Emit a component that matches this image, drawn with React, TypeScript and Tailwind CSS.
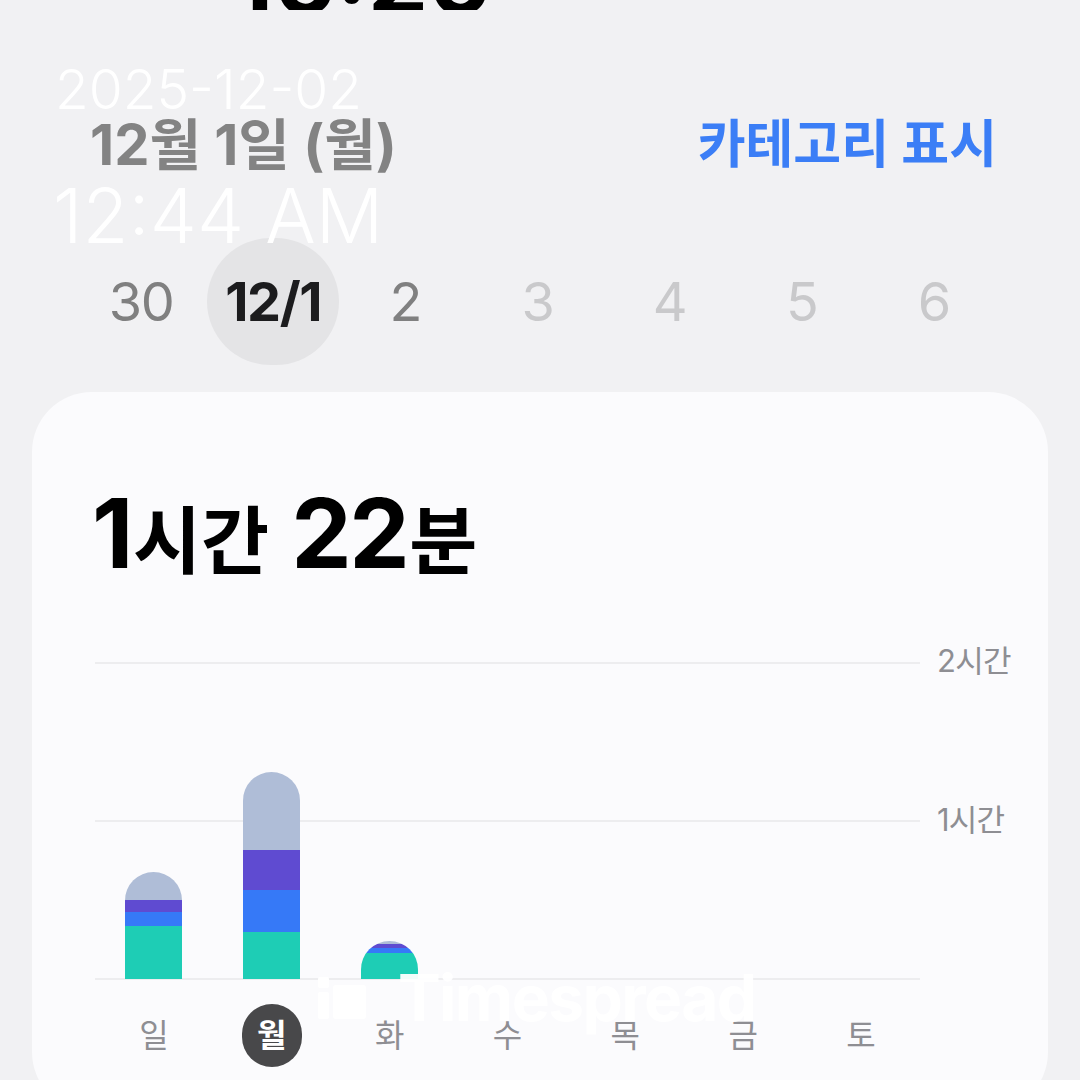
const bars = [
  { day: "일", segs: [28, 12, 14, 53] },
  { day: "월", segs: [78, 40, 42, 47], active: true },
  { day: "화", segs: [3, 4, 5, 26] },
  { day: "수", segs: [] },
  { day: "목", segs: [] },
  { day: "금", segs: [] },
  { day: "토", segs: [] },
];

const segColors = ["bg-[#afbdd7]", "bg-[#5f4bd1]", "bg-[#3679f7]", "bg-[#1ecdb5]"];

const dates = [
  { label: "30", cls: "text-[#808080]" },
  { label: "12/1", cls: "text-[#1c1c1e] font-bold", active: true },
  { label: "2", cls: "text-[#808080]" },
  { label: "3", cls: "text-[#c9c9cb]" },
  { label: "4", cls: "text-[#c9c9cb]" },
  { label: "5", cls: "text-[#c9c9cb]" },
  { label: "6", cls: "text-[#c9c9cb]" },
];

function Bar({ segs }: { segs: number[] }) {
  if (!segs.length) return <div />;
  return (
    <div className="w-[57px] rounded-t-full overflow-hidden flex flex-col">
      {segs.map((h, i) => (
        <div key={i} className={segColors[i]} style={{ height: h }} />
      ))}
    </div>
  );
}

export default function App() {
  return (
    <div
      className="relative w-[1080px] h-[1080px] overflow-hidden bg-[#f1f1f3]"
      style={{ fontFamily: "Inter, 'Noto Sans CJK KR', sans-serif" }}
    >
      {/* 잘린 상단 제목 */}
      <div className="h-[10px] overflow-hidden flex items-end pl-[232px]">
        <div className="text-[96px] font-bold leading-none text-black -mb-[17px]">16:26</div>
      </div>

      {/* 날짜 + 카테고리 */}
      <div className="mt-[108px] h-[54px] flex items-center justify-between pl-[90px] pr-[83px]">
        <span className="text-[56px] font-bold text-[#838383] leading-none">12월 1일 (월)</span>
        <span className="text-[52px] font-bold text-[#3b7ef6] leading-none">카테고리 표시</span>
      </div>

      {/* 주간 날짜 선택 */}
      <div className="mt-[66px] ml-[75px] w-[925px] grid grid-cols-7 h-[127px]">
        {dates.map((d) => (
          <div key={d.label} className="flex items-center justify-center">
            <div
              className={`w-[132px] h-[127px] rounded-full flex items-center justify-center text-[54px] tracking-tight leading-none ${
                d.active ? "bg-[#e4e4e6]" : ""
              } ${d.cls}`}
            >
              {d.label}
            </div>
          </div>
        ))}
      </div>

      {/* 카드 */}
      <div className="mt-[27px] ml-[32px] w-[1016px] h-[720px] rounded-[60px] bg-[#fbfbfd] pt-[93px]">
        <div className="pl-[60px] flex items-baseline text-black font-bold leading-none">
          <span className="text-[96px] tracking-tight">1</span>
          <span className="text-[74px] ml-[2px]">시간</span>
          <span className="text-[96px] tracking-tight ml-[22px]">22</span>
          <span className="text-[74px] ml-[2px]">분</span>
        </div>

        <div className="mt-[81px] flex">
          <div className="ml-[63px] w-[825px] relative h-[318px]">
            <div className="absolute inset-0 flex flex-col justify-between">
              <div className="h-[2px] bg-[#ededef]" />
              <div className="h-[2px] bg-[#ededef]" />
              <div className="h-[2px] bg-[#ededef]" />
            </div>
            <div className="absolute inset-0 grid grid-cols-7 items-end justify-items-center pb-[1px]">
              {bars.map((b) => (
                <Bar key={b.day} segs={b.segs} />
              ))}
            </div>
          </div>
          <div className="ml-[17px] relative h-[318px] text-[31px] text-[#8e8e93] leading-none whitespace-nowrap tracking-tight">
            <div className="absolute top-[-17px] left-0">2시간</div>
            <div className="absolute top-[142px] left-0">1시간</div>
          </div>
        </div>

        <div className="ml-[63px] w-[825px] grid grid-cols-7 mt-[24px]">
          {bars.map((b) => (
            <div key={b.day} className="flex justify-center">
              <div
                className={`w-[60px] h-[63px] rounded-full flex items-center justify-center text-[32px] leading-none ${
                  b.active ? "bg-[#48484a] text-white font-bold" : "text-[#8e8e93]"
                }`}
              >
                {b.day}
              </div>
            </div>
          ))}
        </div>
      </div>

      {/* 타임스탬프 오버레이 */}
      <div className="absolute left-[55px] top-[62px] text-white text-[55px] font-light leading-none">
        2025-12-02
      </div>
      <div className="absolute left-[53px] top-[178px] text-white text-[75px] font-light leading-none">
        12:44 AM
      </div>

      {/* 워터마크 */}
      <div className="absolute left-[318px] top-[966px] flex items-center gap-[32px] text-white/95">
        <svg width="48" height="42" viewBox="0 0 48 42" fill="white">
          <rect x="0" y="0" width="11" height="11" rx="2" />
          <rect x="0" y="15" width="11" height="27" rx="2" />
          <rect x="15" y="8" width="33" height="34" rx="3" />
        </svg>
        <span className="text-[64px] font-bold tracking-tight leading-none">Timespread</span>
      </div>
    </div>
  );
}
